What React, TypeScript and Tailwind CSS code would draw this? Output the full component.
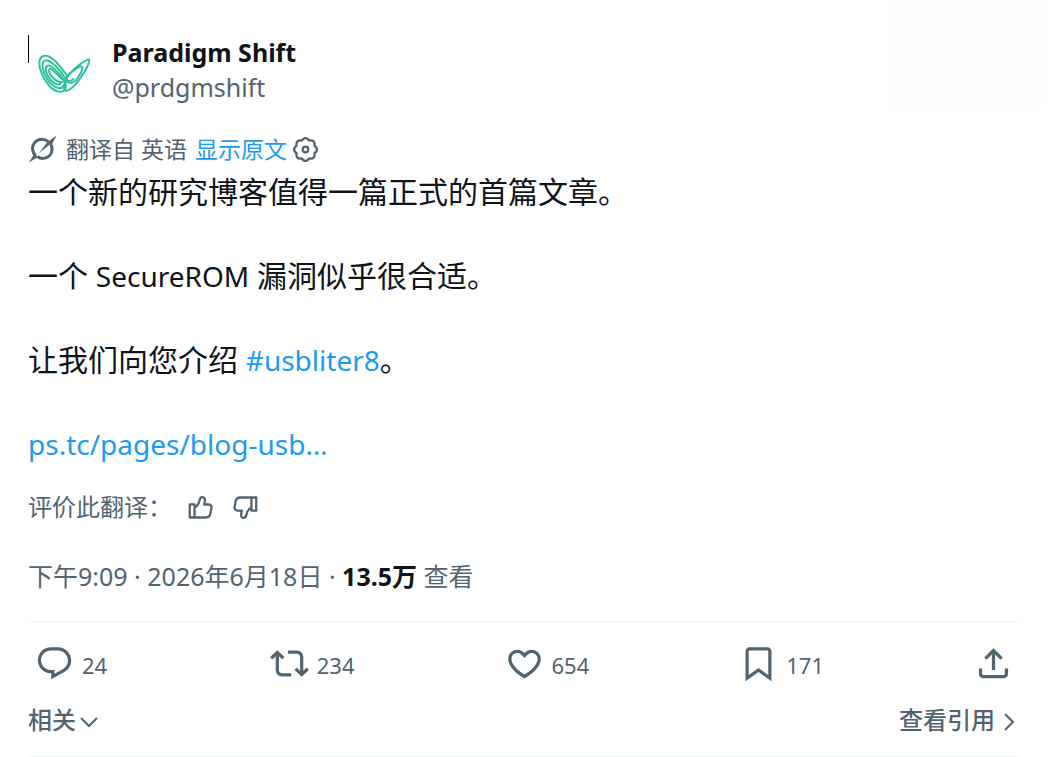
import type { ReactNode } from 'react';

interface IconProps {
  d: string;
  className?: string;
}

function Icon({ d, className = 'size-[39px]' }: IconProps) {
  return (
    <svg viewBox="0 0 24 24" fill="currentColor" aria-hidden="true" className={`shrink-0 ${className}`}>
      <path d={d} />
    </svg>
  );
}

const paths = {
  reply:
    'M1.751 10c0-4.42 3.584-8 8.005-8h4.366c4.49 0 8.129 3.64 8.129 8.13 0 2.96-1.607 5.68-4.196 7.11l-8.054 4.46v-3.69h-.067c-4.49.1-8.183-3.51-8.183-8.01zm8.005-6c-3.317 0-6.005 2.69-6.005 6 0 3.37 2.77 6.08 6.138 6.01l.351-.01h1.761v2.3l5.087-2.81c1.951-1.08 3.163-3.13 3.163-5.36 0-3.39-2.744-6.13-6.129-6.13H9.756z',
  repost:
    'M4.5 3.88l4.432 4.14-1.364 1.46L5.5 7.55V16c0 1.1.896 2 2 2H13v2H7.5c-2.209 0-4-1.79-4-4V7.55L1.432 9.48.068 8.02 4.5 3.88zM16.5 6H11V4h5.5c2.209 0 4 1.79 4 4v8.45l2.068-1.93 1.364 1.46-4.432 4.14-4.432-4.14 1.364-1.46 2.068 1.93V8c0-1.1-.896-2-2-2z',
  like: 'M16.697 5.5c-1.222-.06-2.679.51-3.89 2.16l-.805 1.09-.806-1.09C9.984 6.01 8.526 5.44 7.304 5.5c-1.243.07-2.349.78-2.91 1.91-.552 1.12-.633 2.78.479 4.82 1.074 1.97 3.257 4.27 7.129 6.61 3.87-2.34 6.052-4.64 7.126-6.61 1.111-2.04 1.03-3.7.477-4.82-.561-1.13-1.666-1.84-2.908-1.91zm4.187 7.69c-1.351 2.48-4.001 5.12-8.379 7.67l-.503.3-.504-.3c-4.379-2.55-7.029-5.19-8.382-7.67-1.36-2.5-1.41-4.86-.514-6.67.887-1.79 2.647-2.91 4.601-3.01 1.651-.09 3.368.56 4.798 2.01 1.429-1.45 3.146-2.1 4.796-2.01 1.954.1 3.714 1.22 4.601 3.01.896 1.81.846 4.17-.514 6.67z',
  bookmark:
    'M4 4.5C4 3.12 5.119 2 6.5 2h11C18.881 2 20 3.12 20 4.5v18.44l-8-5.71-8 5.71V4.5zM6.5 4c-.276 0-.5.22-.5.5v14.56l6-4.29 6 4.29V4.5c0-.28-.224-.5-.5-.5h-11z',
  share:
    'M12 2.59l5.7 5.7-1.41 1.42L13 6.41V16h-2V6.41l-3.3 3.3-1.41-1.42L12 2.59zM21 15l-.02 3.51c0 1.38-1.12 2.49-2.5 2.49H5.5C4.11 21 3 19.88 3 18.5V15h2v3.5c0 .28.22.5.5.5h12.98c.28 0 .5-.22.5-.5L19 15h2z',
};

const actions = [
  { label: '回复', count: '24', d: paths.reply },
  { label: '转帖', count: '234', d: paths.repost },
  { label: '喜欢', count: '654', d: paths.like },
  { label: '书签', count: '171', d: paths.bookmark },
];

function ButterflyLogo() {
  return (
    <svg
      viewBox="0 0 180 135"
      fill="none"
      stroke="#2cc29b"
      strokeWidth="6"
      strokeLinecap="round"
      strokeLinejoin="round"
      aria-hidden="true"
      className="h-[45px] w-[60px]"
    >
      <path d="M97 74C80 54 55 14 31 14C11 14 9 38 19 64C30 93 50 121 75 122C97 123 96 99 83 82C69 62 48 41 38 44C27 47 33 71 47 87C58 100 72 104 77 96" />
      <path d="M92 83C74 55 46 24 30 29C17 33 22 61 36 83C49 104 67 115 79 111C91 106 88 96 93 85C98 70 139 32 160 25C166 24 161 42 148 63C131 91 111 116 94 119C85 120 85 108 91 94" />
      <path d="M83 93C60 96 38 65 43 55C49 47 70 77 87 88C100 96 112 104 128 81C139 65 145 50 140 46C132 45 103 67 97 76C89 88 103 95 115 84" />
    </svg>
  );
}

function GrokIcon() {
  return (
    <svg viewBox="0 0 28 28" aria-hidden="true" className="size-7 shrink-0">
      <g fill="none" stroke="currentColor" strokeWidth="3">
        <path d="M7.6 20.4A9.3 9.3 0 0 1 20.2 6.6" />
        <path d="M22.6 9A9.3 9.3 0 0 1 9.6 21.8" />
      </g>
      <path fill="currentColor" d="M28.6.6L23.8 9.4 22 9.2 11 18.2 19.2 7.2zM.8 27.6L6.4 19l2 1.6 2 1.2z" />
    </svg>
  );
}

function GearIcon() {
  return (
    <svg viewBox="0 0 24 24" fill="none" stroke="currentColor" strokeWidth="2.2" strokeLinejoin="round" aria-hidden="true" className="size-[25px]">
      <path d="M15.56 3.41Q21.47 2.53 20.59 8.44 25.4 12 20.59 15.56 21.47 21.47 15.56 20.59 12 25.4 8.44 20.59 2.53 21.47 3.41 15.56-1.4 12 3.41 8.44 2.53 2.53 8.44 3.41 12-1.4 15.56 3.41z" />
      <circle cx="12" cy="12" r="2.7" />
    </svg>
  );
}

function ThumbIcon({ className = '' }: { className?: string }) {
  return (
    <svg
      viewBox="0 0 24 24"
      fill="none"
      stroke="currentColor"
      strokeWidth="2.2"
      strokeLinejoin="round"
      aria-hidden="true"
      className={`size-[25px] ${className}`}
    >
      <path d="M1.7 9h4.6v12.6H1.7zM6.3 12c3.2-1.6 4.3-4.2 4.8-7 .3-1.8 1.2-2.9 2.7-2.9 1.8 0 2.7 1.5 2.4 3.4l-.7 3.6h4.3c1.8 0 3 1.5 2.7 3.2l-1 5.5c-.4 2.2-2 3.8-4.3 3.8H6.3" />
    </svg>
  );
}

function TextLink({ children }: { children: ReactNode }) {
  return (
    <a href="#" className="text-[28px] text-[#1d9bf0] hover:underline">
      {children}
    </a>
  );
}

function Watermark() {
  return (
    <div
      aria-hidden="true"
      className="pointer-events-none absolute top-0 right-0 flex h-[112px] w-[162px] flex-col items-center rounded-b-2xl bg-[#fdfdfd] pt-4 text-[#fefefe] select-none"
    >
      <div className="flex items-center gap-3">
        <span className="rounded-lg border-4 border-[#fefefe] px-3 text-4xl font-bold">IT</span>
        <span className="text-3xl font-bold">之家</span>
      </div>
    </div>
  );
}

export default function App() {
  return (
    <main
      lang="zh-CN"
      className="relative bg-white px-7 pt-[35px] font-['Noto_Sans','Noto_Sans_CJK_SC',sans-serif] text-[#536471]"
    >
      <Watermark />
      <article>
        <header className="flex">
          <span className="h-7 w-px bg-black" />
          <div className="mr-[17px] ml-[6px] flex items-center pt-[6px]">
            <ButterflyLogo />
          </div>
          <div className="flex flex-col text-[25px] leading-[35px]">
            <a href="#" className="font-bold text-[#0f1419]">
              Paradigm Shift
            </a>
            <a href="#">@prdgmshift</a>
          </div>
        </header>

        <div className="mt-[27px] flex items-center text-[23px] leading-[34px]">
          <GrokIcon />
          <span className="mr-2 ml-[10px]">翻译自 英语</span>
          <button type="button" className="text-[#1d9bf0]">
            显示原文
          </button>
          <button type="button" aria-label="翻译设置" className="ml-[6px]">
            <GearIcon />
          </button>
        </div>

        <div className="mt-[5px] space-y-[42px] text-[30px] leading-[42px] text-[#0f1419]">
          <p>一个新的研究博客值得一篇正式的首篇文章。</p>
          <p>
            一个 <span className="text-[28px]">SecureROM</span> 漏洞似乎很合适。
          </p>
          <p>
            让我们向您介绍 <TextLink>#usbliter8</TextLink>。
          </p>
          <p>
            <TextLink>ps.tc/pages/blog-usb…</TextLink>
          </p>
        </div>

        <div className="mt-6 flex items-center text-[24px] leading-9">
          <span>评价此翻译：</span>
          <button type="button" aria-label="翻译得好" className="ml-4">
            <ThumbIcon />
          </button>
          <button type="button" aria-label="翻译得不好" className="ml-5">
            <ThumbIcon className="rotate-180" />
          </button>
        </div>

        <div className="mt-[33px] text-[25px] leading-9">
          <a href="#">下午9:09 · 2026年6月18日</a> · <strong className="text-[#0f1419]">13.5万</strong> 查看
        </div>

        <div className="mt-[27px] flex items-center border-t border-[#eff3f4] px-[7px] pt-[22px] pb-[19px]">
          {actions.map(({ label, count, d }) => (
            <div key={label} className="flex-1">
              <button type="button" aria-label={`${count} ${label}`} className="flex items-center gap-2 text-[22px] leading-[35px]">
                <Icon d={d} />
                <span className="pt-1">{count}</span>
              </button>
            </div>
          ))}
          <button type="button" aria-label="分享">
            <Icon d={paths.share} />
          </button>
        </div>

        <footer className="flex items-center justify-between border-b border-[#eff3f4] pb-[18px] text-[24px] leading-9 font-medium">
          <button type="button" className="flex items-center gap-1">
            相关
            <svg viewBox="0 0 18 18" fill="none" stroke="currentColor" strokeWidth="2" aria-hidden="true" className="mt-1 size-[18px]">
              <path d="M1 5l8 8 8-8" />
            </svg>
          </button>
          <a href="#" className="flex items-center gap-1 pr-[3px]">
            查看引用
            <svg viewBox="0 0 18 18" fill="none" stroke="currentColor" strokeWidth="2" aria-hidden="true" className="mt-1 size-[18px]">
              <path d="M6 1l8 8-8 8" />
            </svg>
          </a>
        </footer>
      </article>
    </main>
  );
}
